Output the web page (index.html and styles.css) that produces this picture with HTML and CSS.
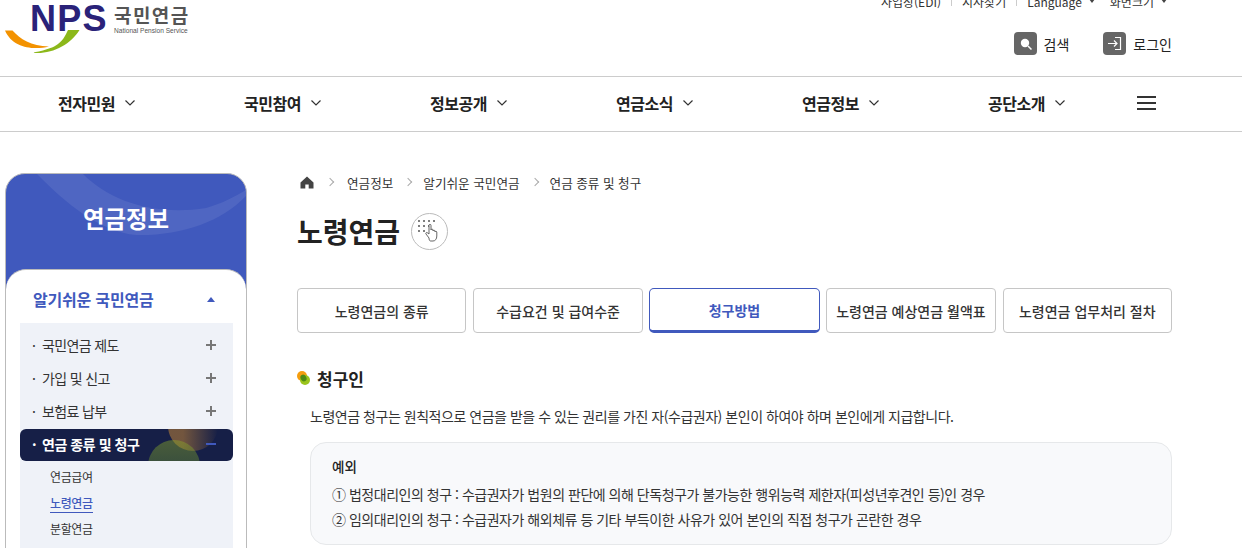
FILE: index.html
```html
<!DOCTYPE html>
<html lang="ko">
<head>
<meta charset="utf-8">
<title>노령연금</title>
<link rel="stylesheet" href="styles.css">
</head>
<body>
<header class="header">
  <a class="logo">
    <span class="logo-nps">NPS</span>
    <svg class="logo-swoosh" width="76" height="24" viewBox="0 0 76 24">
      <path d="M0 .5H7.500C15 9 26 16 44 16.500C30 20 8 19 0 .5Z" fill="#f39200"/>
      <path d="M74.500 0C66 14 48 24 30 23C24 22.500 44 21 53 14C59 9.500 61 4 63 0Z" fill="#8cb81a"/>
    </svg>
    <span class="logo-text">
      <span class="logo-ko">국민연금</span>
      <span class="logo-en">National Pension Service</span>
    </span>
  </a>
  <div class="header-right">
    <ul class="util">
      <li>사업장(EDI)</li>
      <li class="sep"></li>
      <li>지사찾기</li>
      <li class="sep"></li>
      <li>Language<i class="caret"></i></li>
      <li>화면크기<i class="caret"></i></li>
    </ul>
    <div class="actions">
      <a class="action">
        <span class="action-icon">
          <svg width="23" height="23" viewBox="0 0 23 23"><circle cx="11" cy="11" r="4.200" fill="#fff"/><path d="M14 14l3.500 3.500" stroke="#fff" stroke-width="1.500"/></svg>
        </span>검색</a>
      <a class="action">
        <span class="action-icon">
          <svg width="23" height="23" viewBox="0 0 23 23" fill="none" stroke="#fff" stroke-width="1.200"><path d="M12 5.500h5.500v12H12"/><path d="M5 11.500h9M11 8.500l3 3-3 3"/></svg>
        </span>로그인</a>
    </div>
  </div>
</header>
<nav class="gnb">
  <a class="gnb-item">전자민원<svg class="chev" width="12" height="8" viewBox="0 0 12 8"><path d="M1.500 1.500L6 6l4.500-4.500" fill="none" stroke="#333" stroke-width="1.200"/></svg></a>
  <a class="gnb-item">국민참여<svg class="chev" width="12" height="8" viewBox="0 0 12 8"><path d="M1.500 1.500L6 6l4.500-4.500" fill="none" stroke="#333" stroke-width="1.200"/></svg></a>
  <a class="gnb-item">정보공개<svg class="chev" width="12" height="8" viewBox="0 0 12 8"><path d="M1.500 1.500L6 6l4.500-4.500" fill="none" stroke="#333" stroke-width="1.200"/></svg></a>
  <a class="gnb-item">연금소식<svg class="chev" width="12" height="8" viewBox="0 0 12 8"><path d="M1.500 1.500L6 6l4.500-4.500" fill="none" stroke="#333" stroke-width="1.200"/></svg></a>
  <a class="gnb-item">연금정보<svg class="chev" width="12" height="8" viewBox="0 0 12 8"><path d="M1.500 1.500L6 6l4.500-4.500" fill="none" stroke="#333" stroke-width="1.200"/></svg></a>
  <a class="gnb-item">공단소개<svg class="chev" width="12" height="8" viewBox="0 0 12 8"><path d="M1.500 1.500L6 6l4.500-4.500" fill="none" stroke="#333" stroke-width="1.200"/></svg></a>
  <span class="burger"><i></i><i></i><i></i></span>
</nav>
<div class="body">
  <aside class="side">
    <div class="side-head">
      <svg class="side-swirl" width="240" height="96" viewBox="0 0 240 96"><path d="M31 0H77C105 28 150 42 200 34C215 30 230 22 240 16V22C215 48 175 62 130 61C95 58 60 30 31 0Z" fill="#fff" opacity=".08"/></svg>
      <h2 class="side-title">연금정보</h2>
    </div>
    <div class="side-panel">
      <div class="side-group">알기쉬운 국민연금<i class="tri"></i></div>
      <ul class="side-list">
        <li class="side-item"><span class="bul">·</span><span class="side-label">국민연금 제도</span><b class="plus"></b></li>
        <li class="side-item"><span class="bul">·</span><span class="side-label">가입 및 신고</span><b class="plus"></b></li>
        <li class="side-item"><span class="bul">·</span><span class="side-label">보험료 납부</span><b class="plus"></b></li>
        <li class="side-item active"><span class="bul">·</span><span class="side-label">연금 종류 및 청구</span><b class="minus"></b></li>
        <li class="side-sub">연금급여</li>
        <li class="side-sub current"><span>노령연금</span></li>
        <li class="side-sub">분할연금</li>
      </ul>
    </div>
  </aside>
  <main class="main">
    <div class="crumbs">
      <svg class="home" width="14" height="13" viewBox="0 0 14 13"><path d="M7 .5L13.500 6.500V12.500H8.700V8.500H5.300V12.500H.5V6.500Z" fill="#444"/></svg>
      <span class="gt"></span><span>연금정보</span>
      <span class="gt"></span><span>알기쉬운 국민연금</span>
      <span class="gt"></span><span>연금 종류 및 청구</span>
    </div>
    <div class="title-row">
      <h1 class="title">노령연금</h1>
      <span class="braille">
        <svg width="26" height="26" viewBox="0 0 26 26">
          <g fill="#555"><circle cx="2" cy="3" r="1"/><circle cx="7" cy="3" r="1"/><circle cx="12" cy="3" r="1"/><circle cx="17" cy="3" r="1"/><circle cx="2" cy="8" r="1"/><circle cx="7" cy="8" r="1"/><circle cx="12" cy="8" r="1"/><circle cx="2" cy="13" r="1"/><circle cx="7" cy="13" r="1"/></g>
          <path d="M12 20l-3-4c-.8-1 .6-2 1.400-1.200L12 16V7.500c0-1.600 2-1.600 2 0V12c0-1.200 2-1.200 2 0v1c0-1 2-1 2 0v1c0-.9 1.800-.9 1.800 0v4c0 3-1.500 5-3.800 5h-2.500c-1 0-1.500-1.500-1.500-3Z" fill="#fff" stroke="#555" stroke-width=".9"/>
        </svg>
      </span>
    </div>
    <div class="tabs">
      <a class="tab">노령연금의 종류</a>
      <a class="tab">수급요건 및 급여수준</a>
      <a class="tab on">청구방법</a>
      <a class="tab">노령연금 예상연금 월액표</a>
      <a class="tab">노령연금 업무처리 절차</a>
    </div>
    <h3 class="section">
      <svg class="dot" width="13" height="14" viewBox="0 0 13 14"><circle cx="5" cy="5" r="5" fill="#f59d0e"/><circle cx="8" cy="9" r="5" fill="#9ac41c"/><ellipse cx="6.500" cy="7" rx="2.800" ry="3.600" transform="rotate(-30 6.500 7)" fill="#4f8a12"/></svg>청구인</h3>
    <p class="lead">노령연금 청구는 원칙적으로 연금을 받을 수 있는 권리를 가진 자(수급권자) 본인이 하여야 하며 본인에게 지급합니다.</p>
    <div class="note">
      <strong class="note-title">예외</strong>
      <p class="note-line">① 법정대리인의 청구 : 수급권자가 법원의 판단에 의해 단독청구가 불가능한 행위능력 제한자(피성년후견인 등)인 경우</p>
      <p class="note-line">② 임의대리인의 청구 : 수급권자가 해외체류 등 기타 부득이한 사유가 있어 본인의 직접 청구가 곤란한 경우</p>
    </div>
  </main>
</div>
</body>
</html>
```
FILE: styles.css
```css
* { box-sizing: border-box; margin: 0; padding: 0; }
html, body { height: 548px; overflow: hidden; }
body {
  background: #fff;
  color: #222;
  font-family: "Noto Sans CJK KR", "Noto Sans", sans-serif;
  font-size: 14px;
}
ul { list-style: none; }
i, b { display: block; font-style: normal; }

.header { height: 77px; border-bottom: 1px solid #ccc; display: flex; justify-content: space-between; padding: 0 70px 0 5px; }
.logo { position: relative; display: flex; width: 190px; height: 54px; }
.logo-nps { position: absolute; left: 25px; top: -1px; font: bold 36px/40px "Liberation Sans", sans-serif; color: #2a2279; letter-spacing: 1.200px; }
.logo-swoosh { position: absolute; left: 0; top: 30px; }
.logo-text { position: absolute; left: 109px; top: 5px; display: flex; flex-direction: column; color: #555; }
.logo-ko { font-size: 19px; line-height: 20px; font-weight: 700; letter-spacing: 1.400px; color: #555; }
.logo-en { font-family: "Liberation Sans", sans-serif; font-size: 6.600px; line-height: 8px; margin-top: 2px; color: #555; }

.header-right { display: flex; flex-direction: column; align-items: flex-end; }
.util { display: flex; align-items: center; margin-top: -8px; height: 18px; font-size: 12px; color: #333; }
.util li { display: flex; align-items: center; margin-left: 10px; }
.util .sep { width: 1px; height: 9px; background: #ccc; }
.caret { width: 0; height: 0; border: 3px solid transparent; border-top: 4px solid #444; border-bottom: 0; margin-left: 7px; }
.util li:last-child { margin-left: 15px; margin-right: 5px; }
.actions { display: flex; gap: 34px; margin-top: 22px; }
.action { display: flex; align-items: center; gap: 7px; font-size: 14px; color: #222; height: 23px; }
.action-icon { width: 23px; height: 23px; background: #666; border-radius: 4px; display: flex; }

.gnb { height: 55px; border-bottom: 1px solid #ccc; display: flex; align-items: center; padding: 0 0 2px 58px; }
.gnb-item { width: 186px; font-size: 16px; letter-spacing: -.5px; font-weight: 700; color: #222; display: flex; align-items: center; }
.chev { margin-left: 9px; }
.burger { display: flex; flex-direction: column; gap: 4px; width: 19px; margin-left: -37px; }
.burger i { height: 2px; background: #333; }

.body { display: flex; padding: 41px 70px 0 5px; }
.side { width: 242px; height: 420px; flex: none; border: 1px solid #bbb; border-radius: 20px; background: #4059bd; overflow: hidden; position: relative; }
.side-head { height: 95px; position: relative; display: flex; justify-content: center; padding-top: 24px; }
.side-swirl { position: absolute; left: 0; top: 0; }
.side-title { position: relative; font-size: 23.400px; line-height: 40px; color: #fff; font-weight: 700; }
.side-panel { background: #fff; border-radius: 20px 20px 0 0; height: 330px; border-top: 1px solid #bbb; padding: 0 13px 0 14px; }
.side-group { display: flex; align-items: center; justify-content: space-between; height: 53px; padding: 5px 18px 0 13px; font-size: 16px; letter-spacing: -.2px; font-weight: 700; color: #4059bd; }
.tri { width: 0; height: 0; border: 4px solid transparent; border-bottom: 5px solid #4059bd; border-top: 0; }
.side-list { background: #eff2f8; padding-top: 6px; height: 260px; }
.side-item { height: 33px; display: flex; align-items: center; padding: 0 17px 1px 12px; font-size: 14px; letter-spacing: -.65px; color: #333; }
.bul { width: 10px; flex: none; }
.side-label { flex: 1; }
.side-item.active { height: 32px; padding-bottom: 3px; letter-spacing: -.45px; background: #161f47; color: #fff; font-weight: 700; border-radius: 6px; position: relative; overflow: hidden; margin-top: 1px; }
.side-item.active::before { content: ""; position: absolute; left: 148px; top: -28px; width: 50px; height: 50px; border-radius: 50%; background: linear-gradient(to left, #161f47, #b07a38 70%); opacity: .6; }
.side-item.active::after { content: ""; position: absolute; left: 128px; top: 11px; width: 52px; height: 52px; border-radius: 50%; background: linear-gradient(#8aa82a, #3a6a3a); opacity: .45; }
.side-item span { position: relative; z-index: 1; }
.plus { width: 10px; height: 10px; position: relative; background: linear-gradient(#777,#777) center / 10px 2px no-repeat, linear-gradient(#777,#777) center / 2px 10px no-repeat; }
.minus { width: 10px; height: 2px; background: #4059bd; position: relative; z-index: 1; }
.side-sub { height: 25px; display: flex; align-items: center; padding-left: 30px; font-size: 12px; letter-spacing: -.4px; color: #333; }
.side-item.active + .side-sub { margin-top: 3px; }
.side-sub.current { margin-top: 2px; }
.side-sub.current span { color: #4059bd; border-bottom: 1px solid #4059bd; line-height: 18px; font-weight: 500; }

.main { margin-left: 50px; width: 875px; flex: none; }
.crumbs { display: flex; align-items: center; height: 20px; margin-top: -1px; padding-left: 3px; font-size: 12.600px; color: #333; }
.gt { width: 6px; height: 6px; border-top: 1px solid #aaa; border-right: 1px solid #aaa; transform: rotate(45deg); margin: 0 12px 0 12px; }
.home + .gt { margin: 0 14px 0 13px; }
.title-row { display: flex; align-items: center; gap: 11px; margin-top: 19px; height: 40px; }
.title { font-size: 28px; font-weight: 700; color: #222; line-height: 40px; }
.braille { width: 37px; height: 37px; border: 1px solid #bbb; border-radius: 50%; display: flex; align-items: center; justify-content: center; }
.tabs { display: grid; grid-template-columns: repeat(5, 1fr); gap: 7px; margin-top: 37px; }
.tab { height: 45px; border: 1px solid #c6c6c6; border-radius: 4px; display: flex; align-items: center; justify-content: center; font-size: 14px; font-weight: 500; color: #333; white-space: nowrap; }
.tab.on { border: 1px solid #4059bd; border-bottom-width: 3px; color: #4059bd; font-weight: 700; border-radius: 5px; margin: 0 -1px; }
.section { display: flex; align-items: center; margin-top: 32px; height: 26px; font-size: 17px; font-weight: 700; color: #222; }
.dot { margin-right: 7px; }
.lead { margin: 15px 0 0 13px; font-size: 14px; letter-spacing: -.47px; line-height: 20px; color: #333; }
.note { margin: 16px 0 0 13px; height: 103px; padding: 13px 21px; border: 1px solid #e6e8ea; border-radius: 16px; background: #f8f9fb; }
.note-title { display: block; font-size: 13.500px; line-height: 20px; font-weight: 500; color: #222; }
.note-line { font-size: 14px; letter-spacing: -.48px; line-height: 25px; margin-top: 6px; color: #333; }
.note-line + .note-line { margin-top: 0; }
```
